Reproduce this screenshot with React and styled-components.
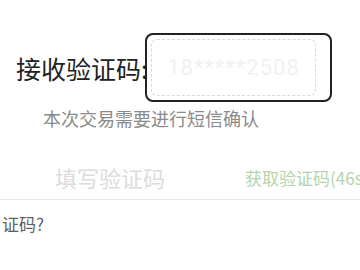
import styled, { createGlobalStyle } from "styled-components";

const GlobalStyle = createGlobalStyle`
  html, body {
    margin: 0;
    padding: 0;
    background: #ffffff;
  }
  body {
    font-family: "Noto Sans CJK SC", "Noto Sans", sans-serif;
    overflow: hidden;
  }
`;

export default function App() {
  return (
    <Page>
      <GlobalStyle />
      <TitleRow>
        <Title>接收验证码</Title>
        <Colon>:</Colon>
        <PhoneBox>
          <PhoneInner>18*****2508</PhoneInner>
        </PhoneBox>
      </TitleRow>
      <Hint>本次交易需要进行短信确认</Hint>
      <CodeRow>
        <Placeholder>填写验证码</Placeholder>
        <SendCode>获取验证码(46s)</SendCode>
      </CodeRow>
      <HelpText>证码?</HelpText>
    </Page>
  );
}

const Page = styled.div`
  width: 360px;
  height: 270px;
  padding-top: 33px;
  box-sizing: border-box;
  overflow: hidden;
`;

const TitleRow = styled.div`
  display: flex;
  align-items: center;
  padding-left: 16px;
`;

const Title = styled.span`
  font-size: 25px;
  line-height: 30px;
  color: #222222;
  white-space: nowrap;
`;

const Colon = styled.span`
  font-size: 25px;
  line-height: 30px;
  color: #222222;
`;

const PhoneBox = styled.div`
  width: 187px;
  height: 69px;
  margin-left: -3px;
  box-sizing: border-box;
  border: 2px solid #222222;
  border-radius: 8px;
  padding: 4px 14px 4px 4px;
  background: #ffffff;
  display: flex;
`;

const PhoneInner = styled.div`
  flex: 1;
  border: 1px dashed #dadada;
  border-radius: 6px;
  display: flex;
  align-items: center;
  justify-content: center;
  font-family: "Roboto", sans-serif;
  font-size: 22px;
  letter-spacing: 1px;
  color: #f1f1f1;
`;

const Hint = styled.div`
  margin: 6px 0 0 43px;
  font-size: 18px;
  line-height: 20px;
  color: #8a8a8a;
`;

const CodeRow = styled.div`
  display: flex;
  align-items: center;
  gap: 80px;
  height: 44px;
  margin-top: 27px;
  padding-left: 55px;
  border-bottom: 1px solid #e6e6e6;
  white-space: nowrap;
  overflow: hidden;
`;

const Placeholder = styled.span`
  font-size: 22px;
  color: #dcdcdc;
`;

const SendCode = styled.span`
  font-size: 17px;
  color: #b3d5ab;
`;

const HelpText = styled.div`
  margin-top: 12px;
  padding-left: 2px;
  font-size: 17px;
  line-height: 24px;
  color: #5f5f5f;
`;
